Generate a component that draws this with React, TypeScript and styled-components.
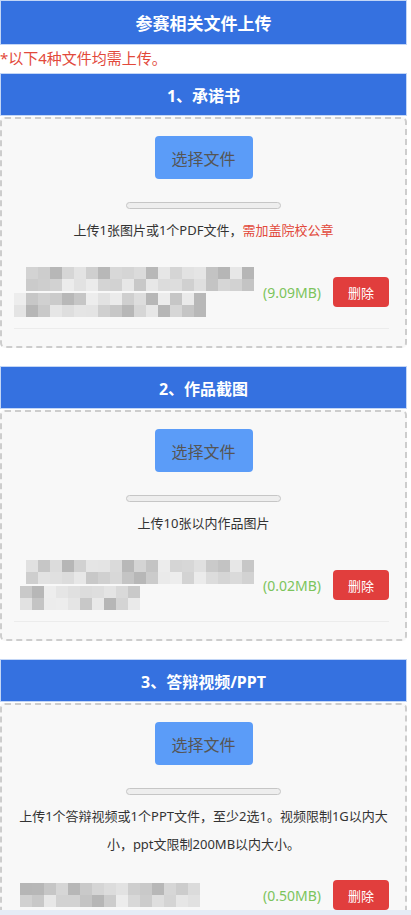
import React from 'react';
import styled, { createGlobalStyle } from 'styled-components';

const GlobalStyle = createGlobalStyle`
  body {
    margin: 0;
    background: #fff;
    font-family: "Noto Sans", "Noto Sans CJK SC", sans-serif;
    color: #333;
  }
`;

const Styles = {
  Page: styled.div`
    width: 407px;
    padding-bottom: 40px;
  `,
  Header: styled.div<{ $big?: boolean }>`
    box-sizing: border-box;
    height: ${(p) => (p.$big ? '45px' : '43px')};
    background: #3571e0;
    border: 1px solid #c3d6f6;
    color: #fff;
    font-weight: 700;
    font-size: ${(p) => (p.$big ? '17px' : '16px')};
    display: flex;
    align-items: center;
    justify-content: center;
  `,
  Note: styled.div`
    height: 28px;
    line-height: 27px;
    font-size: 15px;
    color: #e2493b;
  `,
  Section: styled.section`
    & + & {
      margin-top: 18px;
    }
  `,
  Card: styled.div`
    box-sizing: border-box;
    margin-top: 1px;
    background: #f8f8f8;
    border: 2px dashed #cdcdcd;
    border-radius: 5px;
    padding: 17px 16px 17px 16px;
    display: flex;
    flex-direction: column;
    align-items: center;
  `,
  ChooseButton: styled.div`
    width: 98px;
    height: 43px;
    border-radius: 4px;
    background: #5b9cf8;
    color: #555;
    font-size: 16px;
    display: flex;
    align-items: center;
    justify-content: center;
  `,
  Progress: styled.div`
    box-sizing: border-box;
    margin-top: 23px;
    width: 155px;
    height: 7px;
    border: 1px solid #c6c6c6;
    background: #eeeeee;
    border-radius: 4px;
  `,
  Tip: styled.div`
    margin: 7px -6px 0;
    font-size: 13px;
    line-height: 28px;
    text-align: center;
    color: #333;

    em {
      font-style: normal;
      color: #e2493b;
    }
  `,
  FileRow: styled.div`
    align-self: stretch;
    margin: 10px 0 0 -4px;
    padding: 12px 0 10px;
    border-bottom: 1px solid #ececec;
    display: flex;
    align-items: center;
  `,
  FileName: styled.div`
    flex: 1;
    display: flex;
    flex-direction: column;
    min-height: 30px;
    justify-content: center;
  `,
  Size: styled.div`
    font-size: 14px;
    color: #7cc45c;
    margin: 0 12px 0 8px;
  `,
  DeleteButton: styled.div`
    width: 56px;
    height: 30px;
    border-radius: 4px;
    background: #e13e3d;
    color: #fff;
    font-size: 13px;
    display: flex;
    align-items: center;
    justify-content: center;
  `,
  BottomBar: styled.div`
    position: fixed;
    left: 0;
    right: 0;
    bottom: 0;
    height: 5px;
    background: #e6ecf6;
  `,
};

// redacted file name, drawn as a mosaic of gray cells
const Mosaic = ({ offset, cells, seed }: { offset: number; cells: number; seed: number }) => {
  const size = 12;
  const rects = [];
  let s = seed;
  for (let r = 0; r < 2; r++) {
    for (let c = 0; c < cells; c++) {
      s = (s * 9301 + 49297) % 233280;
      const t = s / 233280;
      const v = t > 0.85 ? 165 + Math.floor(t * 20) : 195 + Math.floor(t * 50);
      rects.push(
        <rect key={`${r}-${c}`} x={offset + c * size} y={r * size} width={size} height={size} fill={`rgb(${v},${v},${v})`} />
      );
    }
  }
  return (
    <svg width={offset + cells * size} height={24} style={{ display: 'block', margin: '1px 0' }}>
      {rects}
    </svg>
  );
};

type Item = {
  title: string;
  tip: React.ReactNode;
  size: string;
  lines: { offset: number; cells: number }[];
};

const items: Item[] = [
  {
    title: '1、承诺书',
    tip: (
      <>
        上传1张图片或1个PDF文件，<em>需加盖院校公章</em>
      </>
    ),
    size: '(9.09MB)',
    lines: [
      { offset: 12, cells: 19 },
      { offset: 0, cells: 16 },
    ],
  },
  {
    title: '2、作品截图',
    tip: '上传10张以内作品图片',
    size: '(0.02MB)',
    lines: [
      { offset: 12, cells: 19 },
      { offset: 6, cells: 10 },
    ],
  },
  {
    title: '3、答辩视频/PPT',
    tip: '上传1个答辩视频或1个PPT文件，至少2选1。视频限制1G以内大小，ppt文限制200MB以内大小。',
    size: '(0.50MB)',
    lines: [{ offset: 6, cells: 15 }],
  },
];

const App = () => {
  return (
    <Styles.Page>
      <GlobalStyle />
      <Styles.Header $big>参赛相关文件上传</Styles.Header>
      <Styles.Note>*以下4种文件均需上传。</Styles.Note>

      {items.map((item, i) => (
        <Styles.Section key={item.title}>
          <Styles.Header>{item.title}</Styles.Header>
          <Styles.Card>
            <Styles.ChooseButton>选择文件</Styles.ChooseButton>
            <Styles.Progress />
            <Styles.Tip>{item.tip}</Styles.Tip>
            <Styles.FileRow>
              <Styles.FileName>
                {item.lines.map((l, j) => (
                  <Mosaic key={j} offset={l.offset} cells={l.cells} seed={i * 7 + j * 13 + 3} />
                ))}
              </Styles.FileName>
              <Styles.Size>{item.size}</Styles.Size>
              <Styles.DeleteButton>删除</Styles.DeleteButton>
            </Styles.FileRow>
          </Styles.Card>
        </Styles.Section>
      ))}

      <Styles.BottomBar />
    </Styles.Page>
  );
};

export default App;
